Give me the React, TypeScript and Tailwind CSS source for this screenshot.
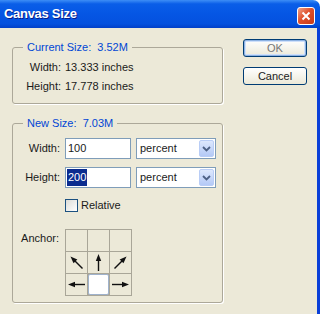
import * as React from "react"

function Arrow({ dir }: { dir: "nw" | "n" | "ne" | "w" | "e" }) {
  const rot = { n: 0, ne: 45, e: 90, w: -90, nw: -45 }[dir]
  return (
    <svg width="21" height="21" viewBox="0 0 21 21">
      <g transform={`rotate(${rot} 10.5 10.5)`}>
        <line x1="10.5" y1="19" x2="10.5" y2="7" stroke="#111" strokeWidth="1.4" />
        <polygon points="10.5,2 7.8,9 13.2,9" fill="#111" />
      </g>
    </svg>
  )
}

function Select() {
  return (
    <div className="flex h-[21px] w-[80px] items-center border border-[#7f9db9] bg-white pl-[3px]">
      <span className="flex-1">percent</span>
      <div className="mr-px flex h-[17px] w-[15px] items-center justify-center rounded-[2px] border border-[#b9cdf6] bg-[linear-gradient(180deg,#dde8fd,#b4c9f6)]">
        <svg width="9" height="6" viewBox="0 0 9 6">
          <path d="M1 1 L4.5 4.5 L8 1" fill="none" stroke="#4d6185" strokeWidth="1.8" />
        </svg>
      </div>
    </div>
  )
}

export default function App() {
  const cell = "flex h-[21px] w-[21px] items-center justify-center bg-[#ece9d8]"
  return (
    <div className="h-[314px] w-[320px] overflow-hidden bg-white font-['Liberation_Sans',Arial,sans-serif] text-[11px] text-[#1a1a1a]">
      <div className="flex h-[28px] items-center justify-between rounded-tr-[7px] bg-[linear-gradient(180deg,#3d8ef6_0%,#0a5ee8_14%,#0556e4_50%,#0451de_85%,#0240c8_100%)] pl-[4px] pr-[5px]">
        <span className="text-[13px] font-bold tracking-[-0.3px] text-white [text-shadow:1px_1px_0_#0a1e8a]">
          Canvas Size
        </span>
        <div className="mt-[3px] flex h-[18px] w-[18px] items-center justify-center rounded-[3px] border border-white bg-[linear-gradient(135deg,#f0a48a,#e0502c_45%,#c73a17)]">
          <svg width="10" height="10" viewBox="0 0 10 10">
            <path d="M1.5 1.5 L8.5 8.5 M8.5 1.5 L1.5 8.5" stroke="white" strokeWidth="2" />
          </svg>
        </div>
      </div>
      <div className="flex h-[286px] border-r-[3px] border-[#0a3fd8] bg-[#ece9d8] pl-[12px] pt-[13px]">
        <div className="flex w-[211px] flex-col">
          <fieldset className="rounded-[3px] border border-[#aca899] pb-[7px] shadow-[1px_1px_0_#fff]">
            <legend className="ml-[10px] px-[4px] leading-[13px] text-[#0046d5]">Current Size:&nbsp; 3.52M</legend>
            <div className="mt-[4px] flex flex-col">
              <div className="flex h-[19px] items-center">
                <span className="w-[48px] text-right">Width:</span>
                <span className="ml-[4px]">13.333 inches</span>
              </div>
              <div className="flex h-[19px] items-center">
                <span className="w-[48px] text-right">Height:</span>
                <span className="ml-[4px]">17.778 inches</span>
              </div>
            </div>
          </fieldset>
          <fieldset className="mt-[13px] rounded-[3px] border border-[#aca899] pb-[6px] shadow-[1px_1px_0_#fff]">
            <legend className="ml-[10px] px-[4px] leading-[13px] text-[#0046d5]">New Size:&nbsp; 7.03M</legend>
            <div className="mt-[8px] flex flex-col gap-[8px]">
              <div className="flex items-center">
                <span className="w-[47px] text-right">Width:</span>
                <div className="ml-[5px] flex h-[21px] w-[66px] items-center border border-[#7f9db9] bg-white pl-[2px]">100</div>
                <div className="ml-[5px]">
                  <Select />
                </div>
              </div>
              <div className="flex items-center">
                <span className="w-[47px] text-right">Height:</span>
                <div className="ml-[5px] flex h-[21px] w-[66px] items-center border border-[#7f9db9] bg-white pl-[1px]">
                  <span className="bg-[#0b2c8f] px-px text-white">200</span>
                </div>
                <div className="ml-[5px]">
                  <Select />
                </div>
              </div>
            </div>
            <div className="ml-[52px] mt-[9px] flex items-center">
              <div className="h-[13px] w-[13px] border border-[#1c5180] bg-[linear-gradient(135deg,#dcdcd7,#fff)]" />
              <span className="ml-[3px]">Relative</span>
            </div>
            <div className="mt-[15px] flex items-start">
              <span className="w-[46px] text-right leading-[18px]">Anchor:</span>
              <div className="ml-[6px] grid grid-cols-3 gap-px bg-[#a9a698] p-px">
                <div className={cell} />
                <div className={cell} />
                <div className={cell} />
                <div className={cell}><Arrow dir="nw" /></div>
                <div className={cell}><Arrow dir="n" /></div>
                <div className={cell}><Arrow dir="ne" /></div>
                <div className={cell}><Arrow dir="w" /></div>
                <div className="h-[21px] w-[21px] rounded-[2px] border border-[#9fb2cc] bg-white" />
                <div className={cell}><Arrow dir="e" /></div>
              </div>
            </div>
          </fieldset>
        </div>
        <div className="ml-[20px] -mt-[2px] flex flex-col gap-[10px]">
          <div className="flex h-[18px] w-[64px] items-center justify-center rounded-[3px] border border-[#003c74] bg-[linear-gradient(180deg,#fff,#ece9d8)] text-[#777] shadow-[inset_0_0_0_1px_#8db2e3,inset_0_0_0_2px_#cfe0fa]">
            OK
          </div>
          <div className="flex h-[18px] w-[64px] items-center justify-center rounded-[3px] border border-[#003c74] bg-[linear-gradient(180deg,#fff,#ece9d8)] text-[#222]">
            Cancel
          </div>
        </div>
      </div>
    </div>
  )
}
